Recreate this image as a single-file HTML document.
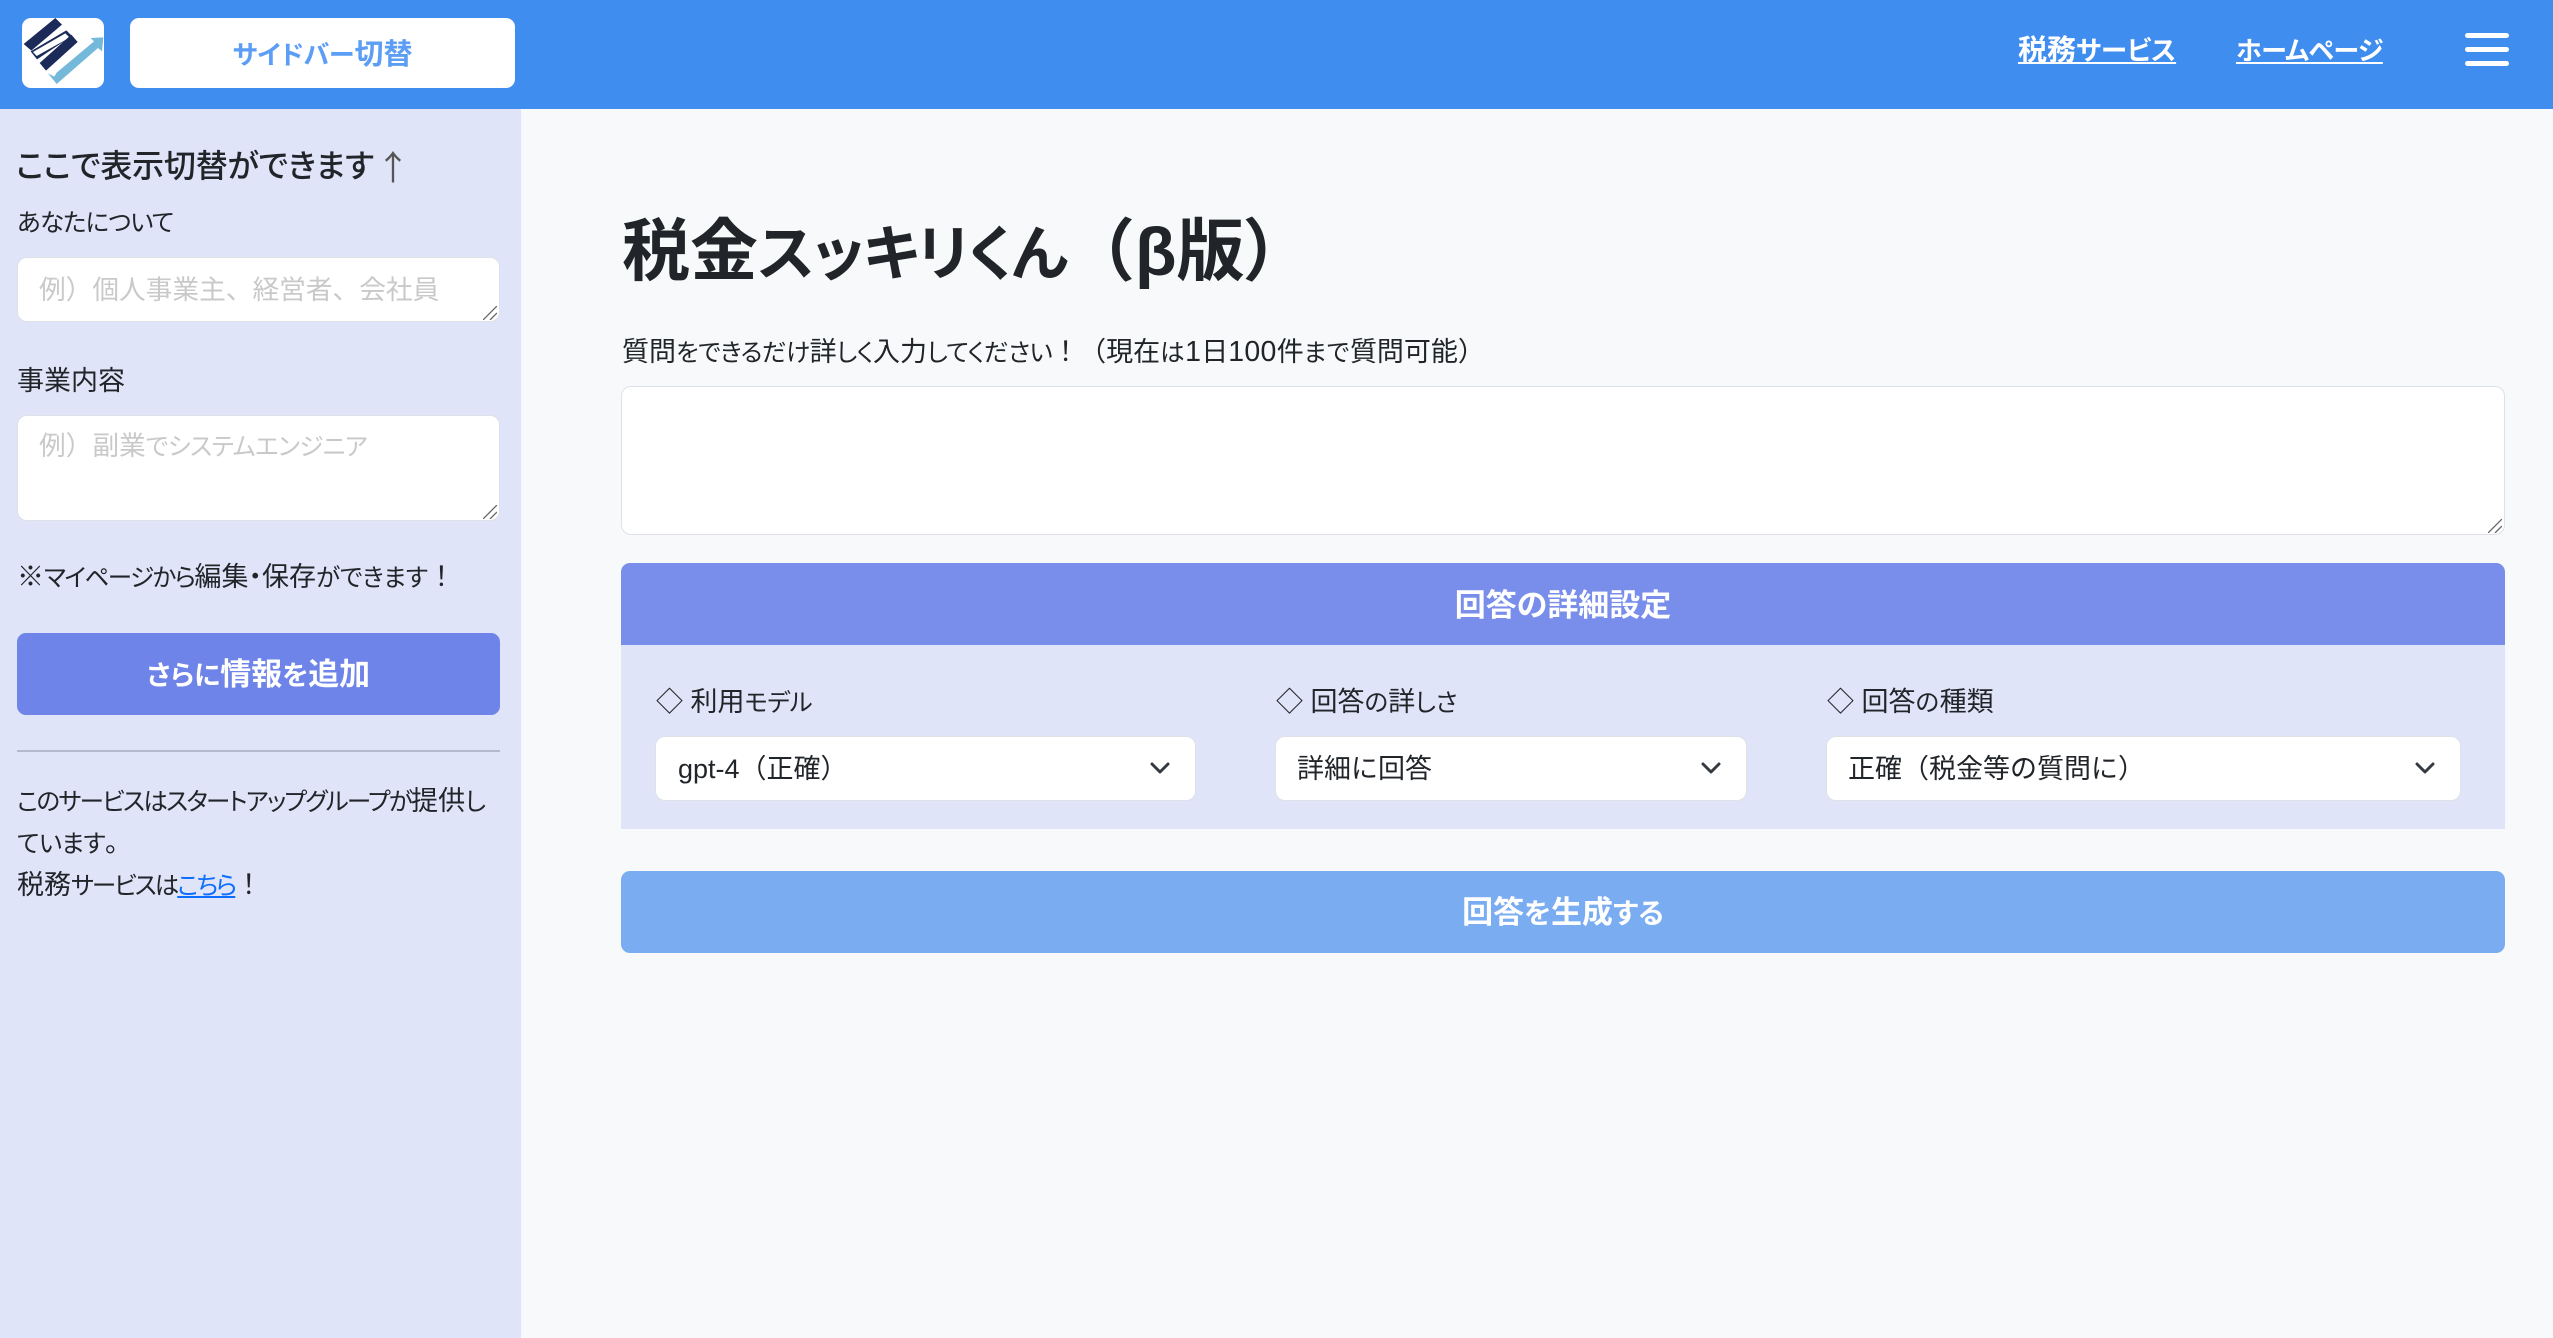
<!DOCTYPE html>
<html lang="ja">
<head>
<meta charset="utf-8">
<title>税金スッキリくん（β版）</title>
<style>
*{box-sizing:border-box}
html,body{margin:0;padding:0;width:2553px;height:1338px;overflow:hidden;background:#f8f9fa}
body{position:relative;font-family:"Liberation Sans","Noto Sans CJK JP",sans-serif;font-size:27px;color:#212529}
.b{position:absolute}
.t{position:absolute;white-space:nowrap;line-height:40px;height:40px}
.c{text-align:center}
.w{color:#fff;font-weight:700;font-size:31px}
.k{font-size:24.5px;font-feature-settings:"palt";letter-spacing:-.6px}
.h{font-size:27.5px;font-feature-settings:"palt";letter-spacing:0}
.ph{color:#c9c9c9}
textarea,select{position:absolute;margin:0;padding:0;background:#fff;border:1px solid #dee2e6;border-radius:10px;font-family:inherit;font-size:27px;color:#212529;outline:none}
textarea{padding:12px 20px;line-height:34px;resize:none}
select{appearance:none;-webkit-appearance:none;padding:0 21px}
a{color:inherit}
</style>
</head>
<body>
<div class="b" style="left:0;top:0;width:2553px;height:109px;background:#408df0"></div>
<div class="b" style="left:22px;top:18px;width:82px;height:70px;background:#fff;border-radius:9px;overflow:hidden">
<svg width="82" height="70" viewBox="0 0 246 210" style="display:block">
<polygon points="100,0 120,20 28,98 5,78" fill="#1b2a59"/>
<polygon points="133,37 150,54 45,124 26,100" fill="#1b2a59"/>
<polygon points="130,46 143,59 44,114 33,102" fill="#fff"/>
<polygon points="148,50 167,72 72,158 53,135" fill="#1b2a59"/>
<polygon points="78,166 104,198 228,90 240,100 244,58 206,60 216,70 104,164 97,176" fill="#74b9d9"/>
</svg>
</div>
<div class="b" style="left:130px;top:18px;width:385px;height:70px;background:#fff;border-radius:9px"></div>
<div class="t c" style="left:130px;top:35px;width:385px;color:#5c9ef5;font-weight:700;font-size:29px"><span style="font-size:26px;font-feature-settings:'palt'">サイドバー</span>切替</div>
<a class="t" href="#" style="left:2018px;top:31px;color:#fff;font-weight:700;font-size:29px">税務<span style="font-size:26.5px;font-feature-settings:'palt'">サービス</span></a>
<a class="t" href="#" style="left:2236px;top:31px;color:#fff;font-weight:700;font-size:26px;font-feature-settings:'palt';letter-spacing:-.5px">ホームページ</a>
<div class="b" style="left:2465px;top:33px;width:44px;height:5px;background:#fff;border-radius:3px"></div>
<div class="b" style="left:2465px;top:47px;width:44px;height:5px;background:#fff;border-radius:3px"></div>
<div class="b" style="left:2465px;top:61px;width:44px;height:5px;background:#fff;border-radius:3px"></div>

<div class="b" style="left:0;top:109px;width:521px;height:1229px;background:#e0e4f8"></div>
<div class="t" style="left:16px;top:146px;font-size:32px;font-weight:500;font-feature-settings:'palt';letter-spacing:-.2px">ここで表示切替ができます</div>
<div class="t" style="left:376px;top:146px;font-size:34px;font-family:'Noto Sans CJK JP',sans-serif;color:#555;width:32px;text-align:center">↑</div>
<div class="t" style="left:17px;top:202px"><span class="k" style="letter-spacing:-.9px">あなたについて</span></div>
<textarea style="left:17px;top:257px;width:483px;height:65px"></textarea>
<div class="t ph" style="left:39px;top:270px;font-size:26.7px">例）個人事業主、経営者、会社員</div>
<div class="t" style="left:17px;top:361px">事業内容</div>
<textarea style="left:17px;top:415px;width:483px;height:106px"></textarea>
<div class="t ph" style="left:39px;top:426px;font-size:26.7px">例）副業<span class="k" style="letter-spacing:-.5px">でシステムエンジニア</span></div>
<div class="t" style="left:17px;top:557px">※<span class="k" style="letter-spacing:-1.5px">マイページから</span>編集<span style="font-feature-settings:'palt'">・</span>保存<span class="k" style="letter-spacing:-.2px">ができます</span>！</div>
<div class="b" style="left:17px;top:633px;width:483px;height:82px;background:#6f84e8;border-radius:9px"></div>
<div class="t c w" style="left:17px;top:655px;width:483px"><span class="h" style="font-size:27px">さらに</span>情報<span class="h" style="font-size:27px">を</span>追加</div>
<div class="b" style="left:17px;top:750px;width:483px;height:2px;background:#b5b9ce"></div>
<div class="t" style="left:17px;top:781px"><span class="k" style="letter-spacing:-1.7px">このサービスはスタートアップグループが</span>提供<span class="k">し</span></div>
<div class="t" style="left:17px;top:823px"><span class="k">ています</span>。</div>
<div class="t" style="left:17px;top:865px">税務<span class="k" style="letter-spacing:-2px">サービスは</span><a href="#" style="color:#0d6efd"><span class="k" style="letter-spacing:-2px">こちら</span></a>！</div>

<div class="t" style="left:622px;top:212px;font-size:68px;font-weight:700;line-height:80px;height:80px">税金<span style="font-size:60px;font-feature-settings:'palt';letter-spacing:-1px">スッキリくん</span>（β<span style="letter-spacing:-2px">版</span>）</div>
<div class="t" style="left:622px;top:332px">質問<span class="k" style="letter-spacing:-.55px">をできるだけ</span>詳<span class="k" style="letter-spacing:-.55px">しく</span>入力<span class="k" style="letter-spacing:-.55px">してください</span>！（現在<span class="k" style="letter-spacing:.5px">は</span><span style="font-size:28.5px;letter-spacing:.3px">1</span>日<span style="font-size:28.5px;letter-spacing:.3px">100</span>件<span class="k" style="letter-spacing:.5px">まで</span>質問可能）</div>
<textarea style="left:621px;top:386px;width:1884px;height:149px"></textarea>
<svg class="b" style="left:483px;top:306px" width="14" height="14" viewBox="0 0 14 14"><path d="M0 14L14 0M7 14L14 7" fill="none" stroke="#666" stroke-width="1.3"/></svg>
<svg class="b" style="left:483px;top:505px" width="14" height="14" viewBox="0 0 14 14"><path d="M0 14L14 0M7 14L14 7" fill="none" stroke="#666" stroke-width="1.3"/></svg>
<svg class="b" style="left:2488px;top:519px" width="14" height="14" viewBox="0 0 14 14"><path d="M0 14L14 0M7 14L14 7" fill="none" stroke="#666" stroke-width="1.3"/></svg>
<div class="b" style="left:621px;top:563px;width:1884px;height:82px;background:#798eea;border-radius:9px 9px 0 0"></div>
<div class="t c w" style="left:621px;top:586px;width:1884px;font-feature-settings:'palt'">回答の詳細設定</div>
<div class="b" style="left:621px;top:645px;width:1884px;height:184px;background:#e0e4f8"></div>
<div class="t" style="left:656px;top:682px">◇ 利用<span class="k" style="letter-spacing:-.5px">モデル</span></div>
<div class="t" style="left:1276px;top:682px">◇ 回答<span class="k" style="letter-spacing:0">の</span>詳<span class="k" style="letter-spacing:-.3px">しさ</span></div>
<div class="t" style="left:1827px;top:682px">◇ 回答<span class="k" style="letter-spacing:.5px">の</span>種類</div>
<select style="left:655px;top:736px;width:541px;height:65px;padding-left:22px"><option>gpt-4（正確）</option></select>
<select style="left:1275px;top:736px;width:472px;height:65px;padding-left:21px"><option>詳細に回答</option></select>
<select style="left:1826px;top:736px;width:635px;height:65px;padding-left:21px"><option>正確（税金等の質問に）</option></select>
<svg class="b" style="left:1149px;top:761px" width="22" height="16" viewBox="0 0 22 16"><path d="M3 3l8 8 8-8" fill="none" stroke="#343a40" stroke-width="3" stroke-linecap="round" stroke-linejoin="round"/></svg>
<svg class="b" style="left:1700px;top:761px" width="22" height="16" viewBox="0 0 22 16"><path d="M3 3l8 8 8-8" fill="none" stroke="#343a40" stroke-width="3" stroke-linecap="round" stroke-linejoin="round"/></svg>
<svg class="b" style="left:2414px;top:761px" width="22" height="16" viewBox="0 0 22 16"><path d="M3 3l8 8 8-8" fill="none" stroke="#343a40" stroke-width="3" stroke-linecap="round" stroke-linejoin="round"/></svg>
<div class="b" style="left:621px;top:871px;width:1884px;height:82px;background:#7aacf1;border-radius:9px"></div>
<div class="t c w" style="left:621px;top:893px;width:1884px">回答<span style="font-size:28px;font-feature-settings:'palt'">を</span>生成<span style="font-size:28px;font-feature-settings:'palt'">する</span></div>
</body>
</html>
